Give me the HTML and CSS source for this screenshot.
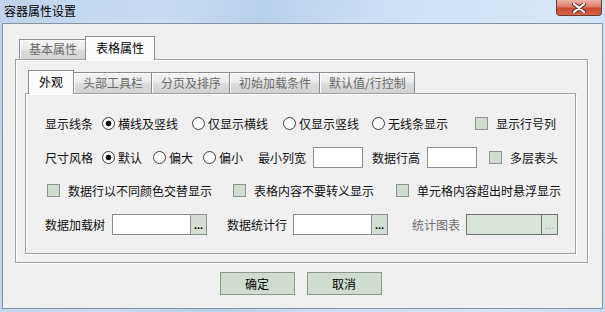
FILE: index.html
```html
<!DOCTYPE html>
<html lang="zh">
<head>
  <meta charset="UTF-8" />
  <title>容器属性设置</title>
  <link rel="stylesheet" href="styles.css">
</head>
<body>

<div class="window">
  <div class="titlebar">
    <span class="title">容器属性设置</span>
    <span class="close-btn">
      <svg width="14" height="10" viewBox="0 0 14 10">
        <path d="M2 1 L12 9 M12 1 L2 9" stroke="#5a2a22" stroke-width="4" stroke-linecap="round"/>
        <path d="M2 1 L12 9 M12 1 L2 9" stroke="#ffffff" stroke-width="2.2" stroke-linecap="round"/>
      </svg>
    </span>
  </div>

  <div class="client">
    <div class="tabstrip outer-strip">
      <span class="tab">基本属性</span>
      <span class="tab active">表格属性</span>
    </div>
    <div class="panel outer-panel">
      <div class="tabstrip inner-strip">
        <span class="tab active">外观</span>
        <span class="tab">头部工具栏</span>
        <span class="tab">分页及排序</span>
        <span class="tab">初始加载条件</span>
        <span class="tab">默认值/行控制</span>
      </div>
      <div class="panel inner-panel">

        <div class="row row-lines">
          <span class="label">显示线条</span>
          <span class="opt ml9"><i class="radio on"></i>横线及竖线</span>
          <span class="opt ml14"><i class="radio"></i>仅显示横线</span>
          <span class="opt ml15"><i class="radio"></i>仅显示竖线</span>
          <span class="opt ml13"><i class="radio"></i>无线条显示</span>
          <span class="opt chk ml27"><i class="check"></i>显示行号列</span>
        </div>

        <div class="row row-size">
          <span class="label">尺寸风格</span>
          <span class="opt ml9"><i class="radio on"></i>默认</span>
          <span class="opt ml11"><i class="radio"></i>偏大</span>
          <span class="opt ml10"><i class="radio"></i>偏小</span>
          <span class="label ml15">最小列宽</span>
          <span class="text-input ml7"></span>
          <span class="label ml9">数据行高</span>
          <span class="text-input ml7"></span>
          <span class="opt chk ml12"><i class="check"></i>多层表头</span>
        </div>

        <div class="row row-checks">
          <span class="opt chk"><i class="check"></i>数据行以不同颜色交替显示</span>
          <span class="opt chk ml21"><i class="check"></i>表格内容不要转义显示</span>
          <span class="opt chk ml22"><i class="check"></i>单元格内容超出时悬浮显示</span>
        </div>

        <div class="row row-pickers">
          <span class="label">数据加载树</span>
          <span class="picker ml7"><span class="field"></span><span class="dots">...</span></span>
          <span class="label ml20">数据统计行</span>
          <span class="picker ml6"><span class="field"></span><span class="dots">...</span></span>
          <span class="label disabled ml24">统计图表</span>
          <span class="picker disabled ml6"><span class="field"></span><span class="dots">...</span></span>
        </div>

      </div>
    </div>

    <div class="footer">
      <button class="btn">确定</button>
      <button class="btn">取消</button>
    </div>
  </div>
</div>

</body>
</html>
```

FILE: styles.css
```css
body {
  margin: 0;
  width: 605px;
  height: 312px;
  overflow: hidden;
  font-family: "Noto Sans CJK SC", "Liberation Sans", sans-serif;
  font-size: 12px;
  color: #111;
  background: #c3d8ef;
}
.window {
  display: flex;
  flex-direction: column;
  height: 312px;
  background: linear-gradient(100deg, #bfd4ec 0%, #c9dcf1 25%, #b9d0ea 40%, #cfe1f5 60%, #d7e7f7 85%, #c9ddf2 100%);
}
.titlebar {
  height: 23px;
  display: flex;
  align-items: flex-start;
  justify-content: space-between;
  padding-left: 4px;
}
.title {
  line-height: 22px;
  color: #000;
}
.close-btn {
  width: 46px;
  height: 16px;
  margin-right: 3px;
  box-sizing: border-box;
  border: 1px solid #6e3a33;
  border-top: none;
  border-radius: 0 0 4px 4px;
  background: linear-gradient(#ecb3a4 0%, #dc7d68 45%, #c84a30 55%, #d8644a 100%);
  display: flex;
  align-items: center;
  justify-content: center;
}
.close-btn svg {
  display: block;
}

.client {
  flex: 1;
  margin: 0 2px 3px 2px;
  border: 1px solid #8793a3;
  background: #f0f0f0;
  padding: 12px 0 0 12px;
}

/* tabs */
.tabstrip {
  display: flex;
  align-items: flex-end;
  height: 24px;
  margin-bottom: -1px;
  position: relative;
  z-index: 1;
}
.outer-strip { padding-left: 4px; }
.inner-strip { padding-left: 3px; }
.tab {
  box-sizing: border-box;
  height: 21px;
  margin-bottom: 1px;
  padding: 0 8px 0 9px;
  border: 1px solid #8a8d94;
  border-bottom: none;
  background: linear-gradient(#f4f4f4 0%, #ebebeb 45%, #dcdcdc 55%, #d3d3d3 100%);
  box-shadow: inset 1px 1px 0 #fdfdfd;
  color: #6a6a6a;
  line-height: 19px;
  white-space: nowrap;
}
.outer-strip .tab { height: 20px; line-height: 18px; }
.tab + .tab { margin-left: -1px; }
.tab.active {
  height: 24px;
  margin-bottom: 0;
  padding: 0 10px;
  background: #fcfcfc;
  color: #000;
  line-height: 22px;
  position: relative;
  z-index: 2;
}

.panel {
  box-sizing: border-box;
  border: 1px solid #a0a0a0;
  box-shadow: inset 1px 1px 0 #fff, 1px 1px 0 #fff;
  background: #f0f0f0;
}
.outer-panel {
  width: 573px;
  height: 204px;
  padding: 10px 11px 0 9px;
}
.inner-panel {
  height: 161px;
  padding: 19px 0 0 19px;
}

/* rows */
.row {
  display: flex;
  align-items: center;
  height: 20px;
  white-space: nowrap;
}
.row-size { margin-top: 14px; }
.row-checks { margin-top: 13px; padding-left: 2px; }
.row-pickers { margin-top: 14px; }

.opt {
  display: flex;
  align-items: center;
  gap: 3px;
}
.opt.chk { gap: 8px; }
.label.disabled { color: #6d6d6d; }

.radio {
  display: block;
  box-sizing: border-box;
  width: 13px;
  height: 13px;
  border-radius: 50%;
  border: 1px solid #3e3e3e;
  background: radial-gradient(circle, #ffffff 55%, #e2e2e2 100%);
}
.radio.on {
  background: radial-gradient(circle, #111 0, #111 2.4px, #ffffff 3.2px, #ffffff 55%, #e2e2e2 100%);
}
.check {
  display: block;
  box-sizing: border-box;
  width: 13px;
  height: 13px;
  border: 1px solid #8d948d;
  background: #d0dcd0;
}
.text-input {
  box-sizing: border-box;
  width: 50px;
  height: 21px;
  border: 1px solid #8d8d8d;
  background: #fff;
}
.picker {
  display: flex;
  height: 21px;
}
.picker .field {
  box-sizing: border-box;
  width: 78px;
  border: 1px solid #8d8d8d;
  border-right: none;
  background: #fff;
}
.picker .dots {
  box-sizing: border-box;
  width: 17px;
  border: 1px solid #8d8d8d;
  background: #d3dfd3;
  font-family: "Liberation Sans", sans-serif;
  font-size: 11px;
  font-weight: bold;
  line-height: 20px;
  text-align: center;
  color: #000;
}
.picker.disabled .field {
  width: 75px;
  background: #d8e4d8;
  border-color: #727272;
}
.picker.disabled .dots {
  background: #d8e4d8;
  border-color: #727272;
  color: #a0a0a0;
  font-weight: normal;
}

.ml6 { margin-left: 6px; }
.ml7 { margin-left: 7px; }
.ml9 { margin-left: 9px; }
.ml10 { margin-left: 10px; }
.ml11 { margin-left: 11px; }
.ml12 { margin-left: 12px; }
.ml13 { margin-left: 13px; }
.ml14 { margin-left: 14px; }
.ml15 { margin-left: 15px; }
.ml20 { margin-left: 20px; }
.ml21 { margin-left: 21px; }
.ml22 { margin-left: 22px; }
.ml24 { margin-left: 24px; }
.ml27 { margin-left: 27px; }

.footer {
  display: flex;
  justify-content: center;
  gap: 12px;
  margin-top: 9px;
  padding-right: 16px;
}
.btn {
  width: 75px;
  height: 23px;
  padding: 0;
  border: 1px solid #8b998b;
  background: #cfdccf;
  font-family: "Noto Sans CJK SC", sans-serif;
  font-size: 12px;
  color: #000;
}
```
